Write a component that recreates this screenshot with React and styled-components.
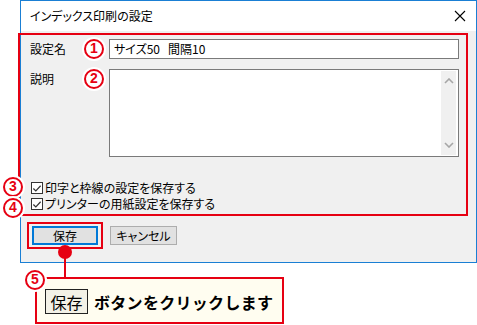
import React from 'react'
import styled, { createGlobalStyle } from 'styled-components'

let AccentRed = "#e60012"
let WinBlue = "#1a7fd4"
let FaceGray = "#f0f0f0"
let FontStack = `"Noto Sans CJK JP", "Noto Sans", sans-serif`

const GlobalStyle = createGlobalStyle`
    html, body {
        margin: 0;
        padding: 0;
        background: #fff;
    }
`

function App() {
    return (
        <Page>
            <GlobalStyle />
            <Dialog>
                <TitleBar>
                    <Title>インデックス印刷の設定</Title>
                    <CloseIcon width="12" height="12" viewBox="0 0 12 12">
                        <path d="M1 1 L11 11 M11 1 L1 11" stroke="#000" strokeWidth="1.1" fill="none" />
                    </CloseIcon>
                </TitleBar>
                <Body>
                    <Highlight>
                        <FieldRow>
                            <Label>設定名</Label>
                            <TextInput>サイズ50&nbsp;&nbsp;&nbsp;間隔10</TextInput>
                        </FieldRow>
                        <FieldRow $gap={10}>
                            <Label>説明</Label>
                            <Memo>
                                <ScrollBar>
                                    <svg width="10" height="6" viewBox="0 0 10 6">
                                        <path d="M1 5 L5 1 L9 5" stroke="#a6a6a6" strokeWidth="1.6" fill="none" />
                                    </svg>
                                    <svg width="10" height="6" viewBox="0 0 10 6">
                                        <path d="M1 1 L5 5 L9 1" stroke="#a6a6a6" strokeWidth="1.6" fill="none" />
                                    </svg>
                                </ScrollBar>
                            </Memo>
                        </FieldRow>
                        <Checks>
                            <CheckRow>
                                <CheckBox><CheckMark /></CheckBox>
                                <CheckText>印字と枠線の設定を保存する</CheckText>
                            </CheckRow>
                            <CheckRow>
                                <CheckBox><CheckMark /></CheckBox>
                                <CheckText>プリンターの用紙設定を保存する</CheckText>
                            </CheckRow>
                        </Checks>
                    </Highlight>
                    <ButtonRow>
                        <Focus>
                            <Button $primary>保存</Button>
                        </Focus>
                        <Button>キャンセル</Button>
                    </ButtonRow>
                </Body>
            </Dialog>

            <Callout>
                <KeyCap>保存</KeyCap>
                <CalloutText>ボタンをクリックします</CalloutText>
            </Callout>

            <Stem />
            <Pin />

            <Badge $x={94} $y={49}>1</Badge>
            <Badge $x={94} $y={79}>2</Badge>
            <Badge $x={13} $y={187}>3</Badge>
            <Badge $x={13} $y={208}>4</Badge>
            <Badge $x={35} $y={280}>5</Badge>
        </Page>
    )
}

function CheckMark() {
    return (
        <svg width="11" height="11" viewBox="0 0 11 11">
            <path d="M1.5 5.5 L4.2 8.2 L9.5 2.5" stroke="#333" strokeWidth="1.3" fill="none" />
        </svg>
    )
}

export default App

const Page = styled.div`
    position: relative;
    width: 477px;
    height: 325px;
    overflow: hidden;
    background: #fff;
    font-family: ${FontStack};
    font-size: 12px;
    color: #000;
    font-feature-settings: "palt";
`
const Dialog = styled.div`
    box-sizing: border-box;
    margin-left: 20px;
    width: 457px;
    height: 263px;
    border: 1px solid ${WinBlue};
    background: ${FaceGray};
`
const TitleBar = styled.div`
    height: 30px;
    background: #fff;
    display: flex;
    align-items: center;
    justify-content: space-between;
    padding: 0 10px 0 9px;
`
const Title = styled.span`
    font-size: 12px;
    line-height: 1;
`
const CloseIcon = styled.svg`
    display: block;
`
const Body = styled.div`
    padding-top: 2px;
`
const Highlight = styled.div`
    box-sizing: border-box;
    margin-left: -3px;
    width: 450px;
    height: 183px;
    border: 2px solid ${AccentRed};
    padding: 4px 0 0 10px;
`
const FieldRow = styled.div`
    display: flex;
    align-items: flex-start;
    margin-top: ${p => p.$gap || 0}px;
`
const Label = styled.div`
    width: 79px;
    line-height: 20px;
`
const TextInput = styled.div`
    box-sizing: border-box;
    width: 350px;
    height: 20px;
    border: 1px solid #7a7a7a;
    background: #fff;
    padding-left: 4px;
    line-height: 18px;
`
const Memo = styled.div`
    box-sizing: border-box;
    width: 350px;
    height: 88px;
    border: 1px solid #7a7a7a;
    background: #fff;
    display: flex;
    justify-content: flex-end;
    padding: 1px 2px 1px 0;
`
const ScrollBar = styled.div`
    width: 15px;
    background: ${FaceGray};
    display: flex;
    flex-direction: column;
    justify-content: space-between;
    align-items: center;
    padding: 7px 0 7px;
`
const Checks = styled.div`
    margin-top: 23px;
    display: flex;
    flex-direction: column;
`
const CheckRow = styled.div`
    display: flex;
    align-items: center;
    height: 16px;
`
const CheckBox = styled.div`
    box-sizing: border-box;
    width: 12px;
    height: 12px;
    margin-left: 1px;
    margin-right: 2px;
    border: 1px solid #333;
    background: #fff;
    display: flex;
    align-items: center;
    justify-content: center;
`
const CheckText = styled.span`
    line-height: 16px;
`
const ButtonRow = styled.div`
    display: flex;
    align-items: center;
    gap: 7px;
    margin-top: 6px;
    padding-left: 6px;
`
const Focus = styled.div`
    border: 2px solid ${AccentRed};
    padding: 2px 3px;
`
const Button = styled.div`
    box-sizing: border-box;
    width: ${p => p.$primary ? 66 : 67}px;
    height: 19px;
    background: #e1e1e1;
    border: ${p => p.$primary ? `2px solid #0078d7` : `1px solid #adadad`};
    display: flex;
    align-items: center;
    justify-content: center;
    font-size: 12px;
`
const Callout = styled.div`
    box-sizing: border-box;
    margin: 14px 0 0 35px;
    width: 249px;
    height: 47px;
    border: 2px solid ${AccentRed};
    background: #fffdf0;
    display: flex;
    align-items: center;
    gap: 6px;
    padding: 2px 0 0 8px;
`
const KeyCap = styled.div`
    box-sizing: border-box;
    width: 43px;
    height: 25px;
    border: 1px solid #222;
    background: #f3f1e6;
    display: flex;
    align-items: center;
    justify-content: center;
    font-size: 16px;
    font-feature-settings: normal;
`
const CalloutText = styled.span`
    font-size: 16px;
    font-weight: 700;
    letter-spacing: 0.3px;
    font-feature-settings: normal;
`
const Pin = styled.div`
    position: absolute;
    left: 58px;
    top: 245px;
    width: 14px;
    height: 14px;
    border-radius: 50%;
    background: ${AccentRed};
`
const Stem = styled.div`
    position: absolute;
    left: 64px;
    top: 252px;
    width: 2px;
    height: 26px;
    background: ${AccentRed};
`
const Badge = styled.div`
    position: absolute;
    left: ${p => p.$x - 10}px;
    top: ${p => p.$y - 10}px;
    box-sizing: border-box;
    width: 20px;
    height: 20px;
    border-radius: 50%;
    border: 2.5px solid ${AccentRed};
    background: #fff;
    box-shadow: 0 0 0 2px #fff;
    color: ${AccentRed};
    font-family: "Liberation Sans", Arial, sans-serif;
    font-weight: bold;
    font-size: 14px;
    line-height: 15px;
    text-align: center;
`
